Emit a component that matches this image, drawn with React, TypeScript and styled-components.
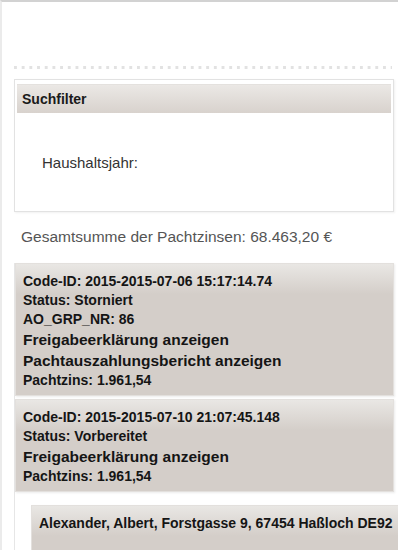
import { createGlobalStyle, styled } from "styled-components";

const GlobalStyle = createGlobalStyle`
  html, body {
    margin: 0;
    padding: 0;
    background: #fff;
    font-family: "Liberation Sans", Arial, sans-serif;
    overflow: hidden;
  }
`;

const Page = styled.div`
  position: relative;
  box-sizing: border-box;
  width: 398px;
  height: 550px;
  overflow: hidden;
  border-top: 2px solid #d2d2d2;
  border-left: 2px solid #ebebeb;
  padding: 0 4px 0 12px;
`;

const Marker = styled.div`
  position: absolute;
  left: -2px;
  top: 0;
  width: 2px;
  height: 30px;
  background: #e9a3ab;
`;

const TopSpace = styled.div`
  height: 64px;
`;

const DottedRule = styled.div`
  height: 3px;
  margin-right: 2px;
  background-image: linear-gradient(to right, #e2e2e2 0 3px, transparent 3px);
  background-size: 7.7px 3px;
  margin-bottom: 10px;
`;

const Panel = styled.section`
  border: 1px solid #e2e2e2;
  padding: 4px 2px 0 2px;
  box-shadow: 1px 1px 2px rgba(0, 0, 0, 0.06);
`;

const PanelHeader = styled.div`
  height: 28px;
  line-height: 28px;
  padding-left: 5px;
  font-size: 14px;
  font-weight: bold;
  color: #1a1a1a;
  background: linear-gradient(#ebe8e5, #d8d2cd);
  border-top: 1px solid #e4e1de;
`;

const PanelBody = styled.div`
  height: 98px;
  display: flex;
  align-items: center;
  padding-left: 25px;
  font-size: 15px;
  color: #333;
`;

const Total = styled.p`
  margin: 0;
  padding: 16px 0 0 7px;
  height: 35px;
  font-size: 15.5px;
  color: #555;
`;

const List = styled.div`
  border-left: 1px solid #e6e6e6;
`;

const Card = styled.div<{ $indent?: boolean }>`
  margin: 0 0 3px ${(p) => (p.$indent ? "16px" : "0")};
  ${(p) => (p.$indent ? "margin-right: -12px;" : "")}
  border: 1px solid #e3e0dd;
  padding: 8px 7px 5px 7px;
  background: linear-gradient(#e9e7e4 0, #d4cec9 30px, #d4cec9 100%);
  box-shadow: 1px 1px 2px rgba(0, 0, 0, 0.08);
  color: #151515;
  white-space: nowrap;
`;

const Gap = styled.div`
  height: 10px;
`;

const Line = styled.div<{ $big?: boolean }>`
  font-weight: bold;
  font-size: ${(p) => (p.$big ? "15.5px" : "14px")};
  line-height: ${(p) => (p.$big ? "21px" : "19px")};
`;

type Entry = {
  code: string;
  status: string;
  grp?: string;
  links: string[];
  zins: string;
};

const entries: Entry[] = [
  {
    code: "2015-2015-07-06 15:17:14.74",
    status: "Storniert",
    grp: "86",
    links: ["Freigabeerklärung anzeigen", "Pachtauszahlungsbericht anzeigen"],
    zins: "1.961,54",
  },
  {
    code: "2015-2015-07-10 21:07:45.148",
    status: "Vorbereitet",
    links: ["Freigabeerklärung anzeigen"],
    zins: "1.961,54",
  },
];

export default function App() {
  return (
    <>
      <GlobalStyle />
      <Page>
        <Marker />
        <TopSpace />
        <DottedRule />
        <Panel>
          <PanelHeader>Suchfilter</PanelHeader>
          <PanelBody>Haushaltsjahr:</PanelBody>
        </Panel>
        <Total>Gesamtsumme der Pachtzinsen: 68.463,20 €</Total>
        <List>
          {entries.map((e) => (
            <Card key={e.code}>
              <Line>Code-ID: {e.code}</Line>
              <Line>Status: {e.status}</Line>
              {e.grp && <Line>AO_GRP_NR: {e.grp}</Line>}
              {e.links.map((l) => (
                <Line $big key={l}>
                  {l}
                </Line>
              ))}
              <Line>Pachtzins: {e.zins}</Line>
            </Card>
          ))}
          <Gap />
          <Card $indent>
            <Line>Alexander, Albert, Forstgasse 9, 67454 Haßloch DE92</Line>
            <Line>&nbsp;</Line>
            <Line>&nbsp;</Line>
          </Card>
        </List>
      </Page>
    </>
  );
}
